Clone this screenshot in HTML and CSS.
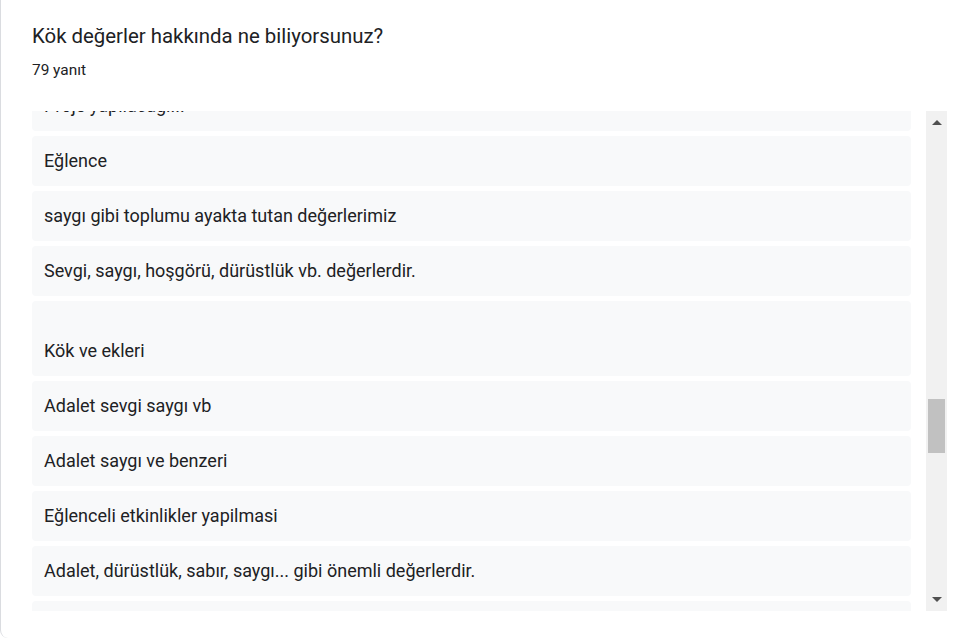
FILE: index.html
```html
<!DOCTYPE html>
<html lang="tr">
<head>
<meta charset="utf-8">
<link rel="stylesheet" href="styles.css">
</head>
<body>
<div class="card">
  <div class="title">Kök değerler hakkında ne biliyorsunuz?</div>
  <div class="count">79 yanıt</div>
  <div class="scroll">
    <div class="viewport">
      <div class="list">
        <div class="item">Proje yapılacağı...</div>
        <div class="item">Eğlence</div>
        <div class="item">saygı gibi toplumu ayakta tutan değerlerimiz</div>
        <div class="item">Sevgi, saygı, hoşgörü, dürüstlük vb. değerlerdir.</div>
        <div class="item"><br>Kök ve ekleri</div>
        <div class="item">Adalet sevgi saygı vb</div>
        <div class="item">Adalet saygı ve benzeri</div>
        <div class="item">Eğlenceli etkinlikler yapilmasi</div>
        <div class="item">Adalet, dürüstlük, sabır, saygı... gibi önemli değerlerdir.</div>
        <div class="item">Sevgi</div>
      </div>
    </div>
    <div class="scrollbar">
      <div class="arrow up"></div>
      <div class="track"><div class="thumb"></div></div>
      <div class="arrow down"></div>
    </div>
  </div>
</div>
</body>
</html>
```

FILE: styles.css
```css
html, body {
  margin: 0;
  padding: 0;
  background: #ffffff;
}
.card {
  box-sizing: border-box;
  height: 638px;
  width: 955px;
  border-left: 1px solid #dadce0;
  border-bottom-left-radius: 8px;
  padding: 22px 8px 0 31px;
  background: #fff;
  color: #202124;
  font-family: Roboto, "Liberation Sans", sans-serif;
}
.title {
  font-family: Roboto, "Open Sans", sans-serif;
  font-size: 20.4px;
  line-height: 28px;
}
.count {
  margin-top: 10px;
  font-size: 15.4px;
  line-height: 21px;
}
.scroll {
  margin-top: 30px;
  height: 500px;
  display: flex;
}
.viewport {
  flex: 1;
  overflow: hidden;
  margin-right: 15px;
}
.list {
  display: flex;
  flex-direction: column;
  gap: 5px;
  margin-top: -30px;
}
.item {
  background: #f8f9fa;
  border-radius: 4px;
  padding: 12px 12px 13px;
  font-size: 18px;
  line-height: 25px;
  white-space: nowrap;
}
.scrollbar {
  width: 21px;
  background: #f1f1f1;
  display: flex;
  flex-direction: column;
  align-items: center;
}
.arrow {
  width: 0;
  height: 0;
  border-left: 5px solid transparent;
  border-right: 5px solid transparent;
}
.arrow.up {
  margin-top: 9px;
  border-bottom: 5px solid #505050;
}
.arrow.down {
  margin-bottom: 9px;
  border-top: 5px solid #505050;
}
.track {
  flex: 1;
  width: 17px;
}
.thumb {
  margin-top: 274px;
  height: 54px;
  background: #c1c1c1;
}
```
